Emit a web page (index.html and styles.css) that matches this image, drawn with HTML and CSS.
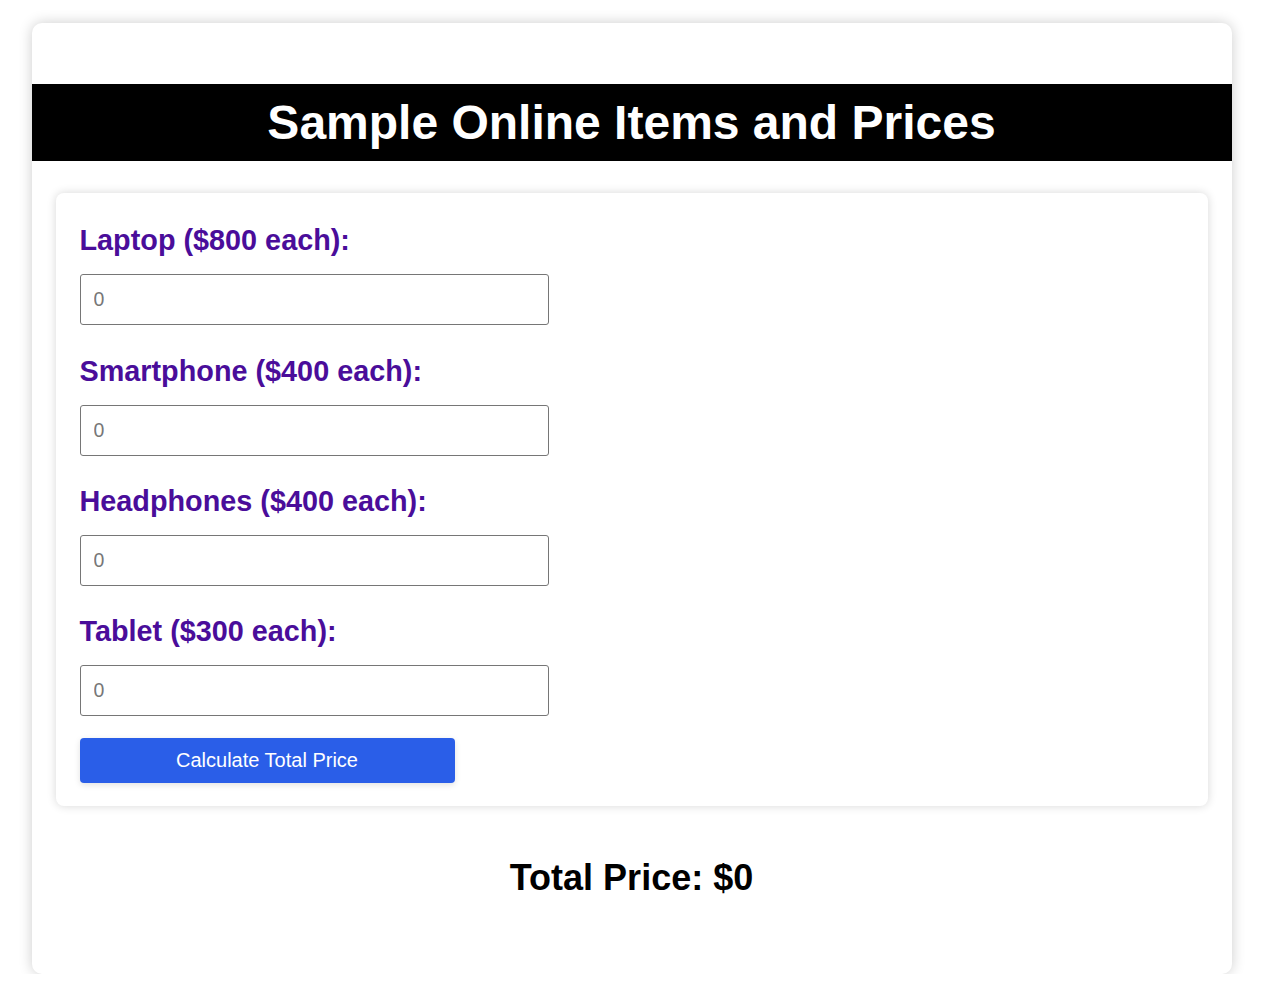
FILE: index.html
```html
<!DOCTYPE html>
<html>
<head>
<meta charset="utf-8">
<link rel="stylesheet" href="styles.css">
</head>
<body>
<div class="container">
  <h1 class="title">Sample Online Items and Prices</h1>
  <form class="form-card">
    <div class="field">
      <label class="label">Laptop ($800 each):</label>
      <input class="input" type="number" placeholder="0">
    </div>
    <div class="field">
      <label class="label">Smartphone ($400 each):</label>
      <input class="input" type="number" placeholder="0">
    </div>
    <div class="field">
      <label class="label">Headphones ($400 each):</label>
      <input class="input" type="number" placeholder="0">
    </div>
    <div class="field">
      <label class="label">Tablet ($300 each):</label>
      <input class="input" type="number" placeholder="0">
    </div>
    <button type="button" class="btn">Calculate Total Price</button>
  </form>
  <h2 class="total">Total Price: $0</h2>
</div>
</body>
</html>
```
FILE: styles.css
```css
html, body {
  margin: 0;
  padding: 0;
  background: #ffffff;
  font-family: "Liberation Sans", Arial, sans-serif;
}
body {
  padding-top: 23px;
}
.container {
  width: 1200px;
  margin: 0 auto;
  position: relative;
  left: 1px;
  background: #fff;
  border-radius: 10px;
  box-shadow: 0 0 14px rgba(0,0,0,0.2);
  padding: 61px 0 60px;
  box-sizing: border-box;
  height: 951px;
}
.title {
  margin: 0;
  background: #000;
  color: #fff;
  text-align: center;
  font-size: 48px;
  font-weight: bold;
  height: 77px;
  line-height: 77px;
}
.form-card {
  margin: 32px 24px 0;
  background: #fff;
  border-radius: 8px;
  box-shadow: 0 0 10px rgba(0,0,0,0.16);
  padding: 24px 24px 23px;
  display: flex;
  flex-direction: column;
  align-items: flex-start;
}
.field {
  display: flex;
  flex-direction: column;
  margin-bottom: 22px;
}
.label {
  color: #4a0d9a;
  font-size: 28.8px;
  font-weight: bold;
  line-height: 32px;
  margin-top: 7px;
  margin-bottom: 18px;
}
.field + .field .label {
  margin-top: 0;
}
.field + .field {
  margin-top: 7px;
}
.field:nth-child(2) {
  margin-top: 8px;
}
.input {
  width: 469px;
  height: 51px;
  box-sizing: border-box;
  border: 1px solid #767676;
  border-radius: 3px;
  padding: 0 13px;
  font-size: 19.5px;
  font-family: "Liberation Sans", Arial, sans-serif;
  color: #333;
}
.input::placeholder {
  color: #777;
}
.btn {
  width: 375px;
  height: 45px;
  background: #2a5ee8;
  color: #fff;
  border: none;
  border-radius: 4px;
  font-size: 20px;
  font-family: "Liberation Sans", Arial, sans-serif;
  box-shadow: 0 2px 6px rgba(0,0,0,0.12);
}
.total {
  text-align: center;
  font-size: 36px;
  font-weight: bold;
  margin: 51px 0 0;
  color: #000;
}
```
